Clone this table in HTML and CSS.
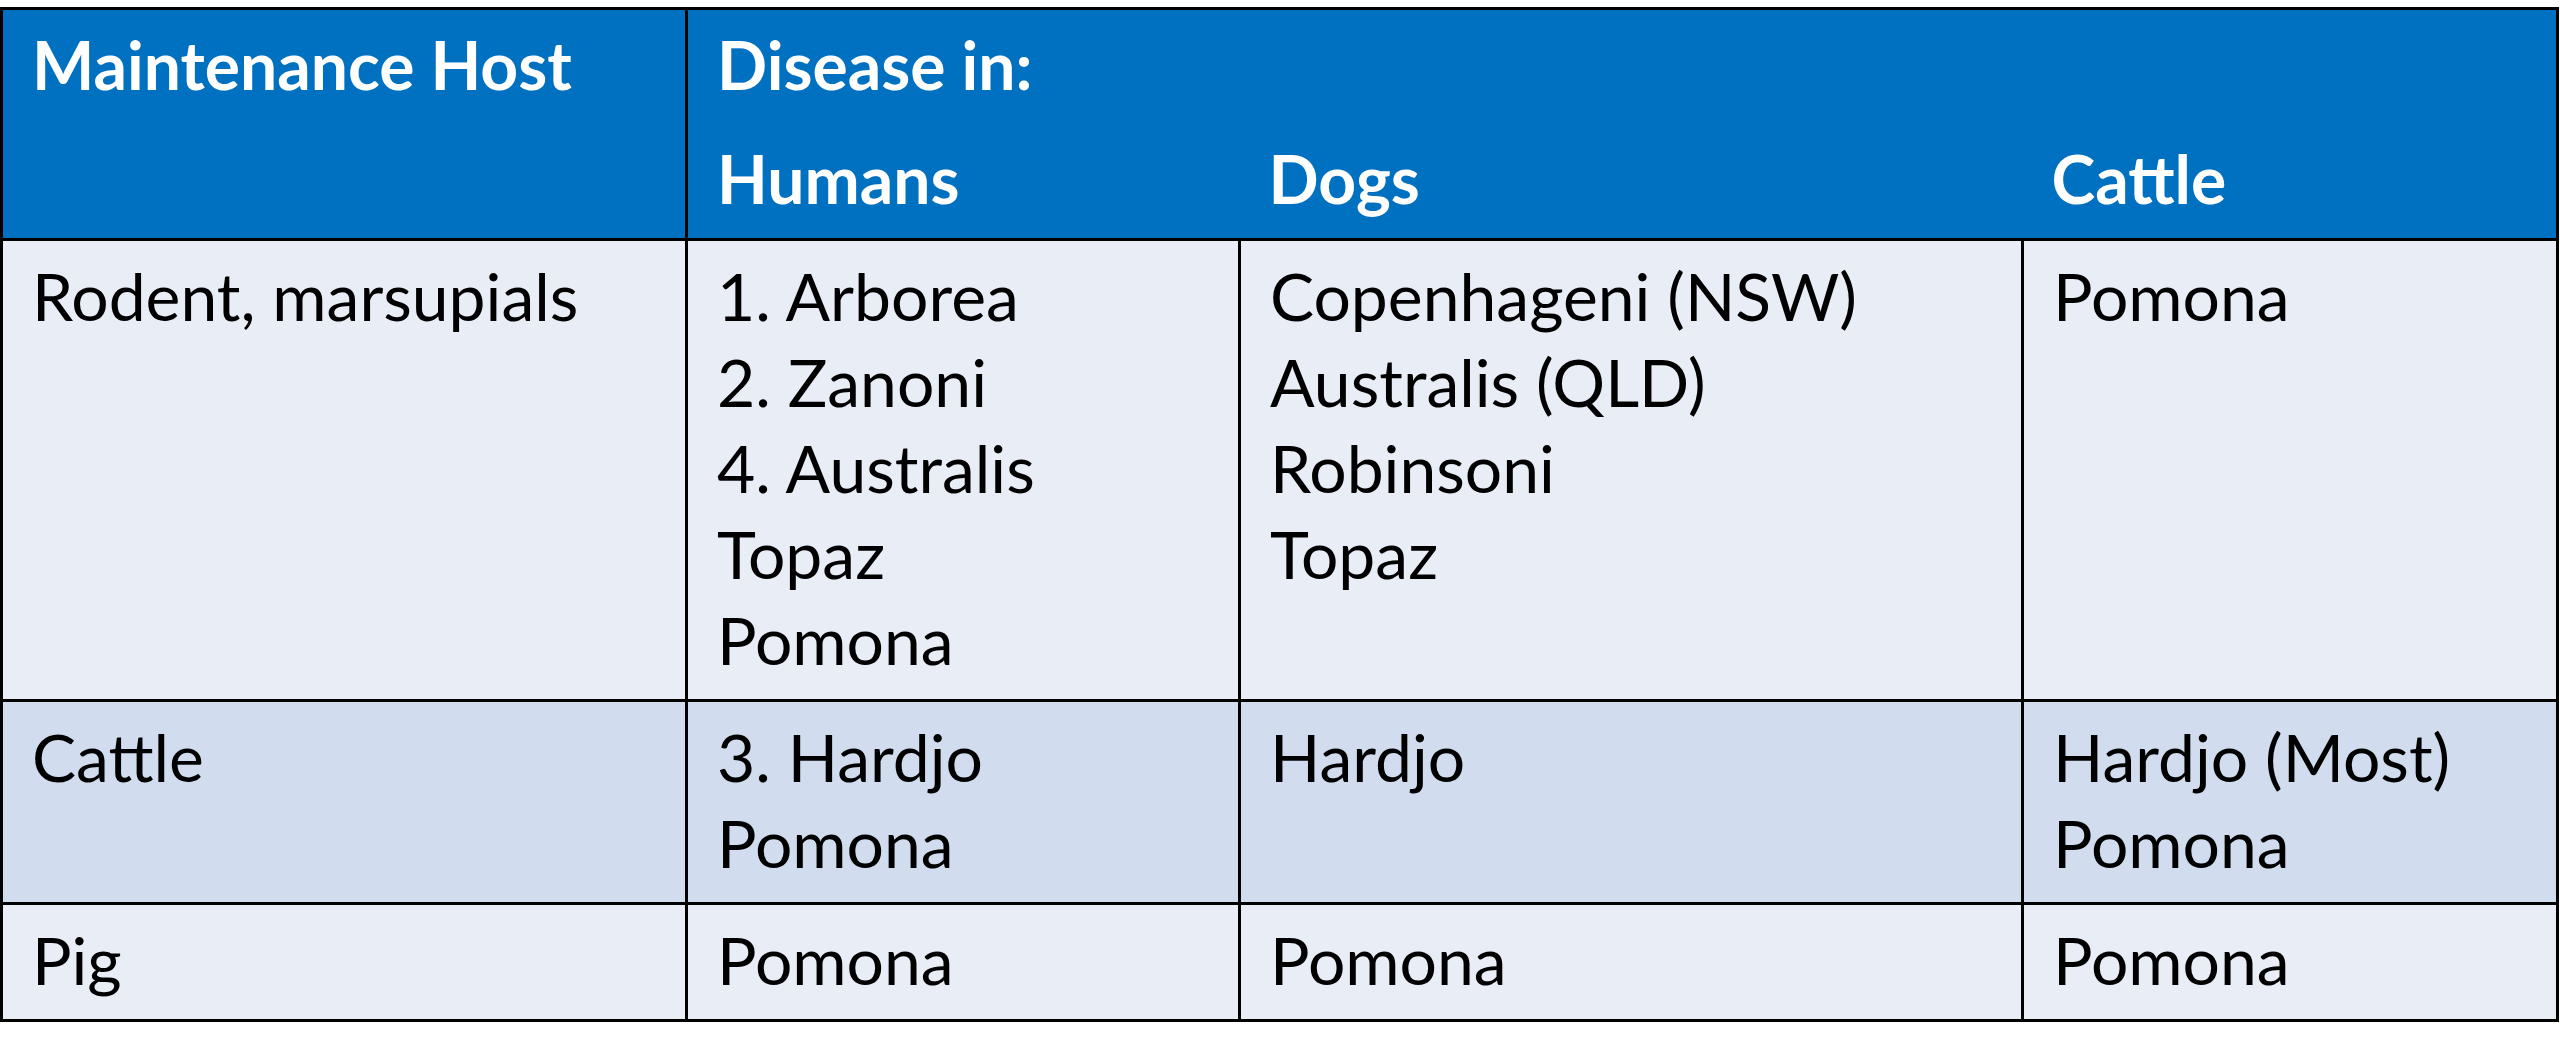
FILE: index.html
```html
<!DOCTYPE html>
<html lang="en">
<head>
<meta charset="utf-8">
<title>Maintenance hosts</title>
<link rel="stylesheet" href="styles.css">
</head>
<body>
<table class="hosts">
  <colgroup>
    <col class="c-host">
    <col class="c-humans">
    <col class="c-dogs">
    <col class="c-cattle">
  </colgroup>
  <thead>
    <tr>
      <th rowspan="2" class="host-head">Maintenance Host</th>
      <th colspan="3" class="disease-head">Disease in:</th>
    </tr>
    <tr class="sub-head">
      <th>Humans</th>
      <th>Dogs</th>
      <th>Cattle</th>
    </tr>
  </thead>
  <tbody>
    <tr class="band-light">
      <td>Rodent, marsupials</td>
      <td>1. Arborea<br>2. Zanoni<br>4. Australis<br>Topaz<br>Pomona</td>
      <td>Copenhageni (NSW)<br>Australis (QLD)<br>Robinsoni<br>Topaz</td>
      <td>Pomona</td>
    </tr>
    <tr class="band-dark">
      <td>Cattle</td>
      <td>3. Hardjo<br>Pomona</td>
      <td>Hardjo</td>
      <td>Hardjo (Most)<br>Pomona</td>
    </tr>
    <tr class="band-light">
      <td>Pig</td>
      <td>Pomona</td>
      <td>Pomona</td>
      <td>Pomona</td>
    </tr>
  </tbody>
</table>
</body>
</html>
```

FILE: styles.css
```css
html, body {
  margin: 0;
  padding: 0;
  background: #ffffff;
}

body {
  padding-top: 7px;
}

.hosts {
  border-collapse: collapse;
  table-layout: fixed;
  width: 2556px;
  border: 3px solid #000;
  font-family: "Lato", "Noto Sans", sans-serif;
  font-size: 66px;
  line-height: 86px;
  color: #000;
}

.c-host { width: 685px; }
.c-humans { width: 553px; }
.c-dogs { width: 783px; }
.c-cattle { width: 535px; }

.hosts th,
.hosts td {
  text-align: left;
  vertical-align: top;
  padding: 12px 10px 16px 29px;
  white-space: nowrap;
}

.hosts th {
  background: #0070c0;
  color: #ffffff;
  font-weight: 700;
  border: none;
}

.hosts .host-head {
  border-right: 3px solid #000;
  border-bottom: 3px solid #000;
}

.hosts .sub-head th {
  border-bottom: 3px solid #000;
}

.hosts td {
  border: 3px solid #000;
  font-weight: 400;
}

.band-light td {
  background: #e9edf5;
}

.band-dark td {
  background: #d1ddee;
}
```
